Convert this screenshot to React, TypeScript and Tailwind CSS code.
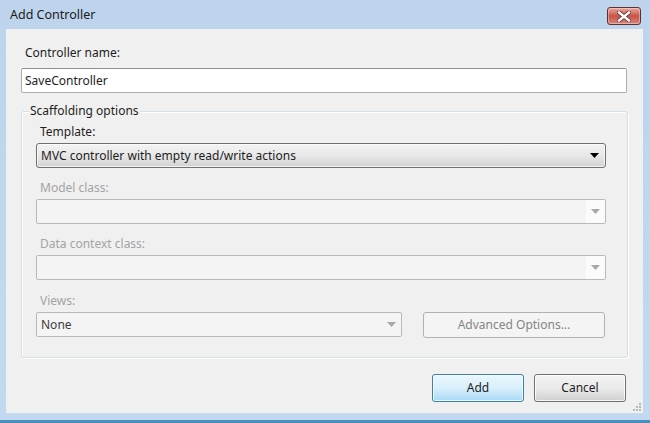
import React from 'react';

const font = { fontFamily: '"Noto Sans", "Open Sans", sans-serif' };

const Arrow = ({ color }: { color: string }) => (
  <svg width="9" height="5" viewBox="0 0 9 5">
    <path d="M0 0 H9 L4.5 5 Z" fill={color} />
  </svg>
);

const DisabledCombo = ({ w = 'w-[570px]', text, editable }: { w?: string; text?: string; editable?: boolean }) => (
  <div className={`${w} h-[25px] flex items-stretch rounded-[2px] border border-[#b7babc] bg-[#f4f4f4] overflow-hidden`}>
    <div className="flex-1 flex items-center pl-[4px] text-[12px] text-[#3c3c3c]">{text}</div>
    <div className={`w-[19px] flex items-center justify-center ${editable ? 'bg-[#fbfbfb]' : ''}`}>
      <Arrow color="#a8a8a8" />
    </div>
  </div>
);

export default function App() {
  return (
    <div
      className="w-[650px] h-[423px] flex flex-col bg-gradient-to-b from-[#bed4ec] to-[#c3d9ef] overflow-hidden"
      style={font}
    >
      {/* Title bar */}
      <div className="h-[29px] flex items-start justify-between pl-[10px] pr-[9px]">
        <div className="pt-[6px] text-[12.5px] text-[#1b1b1b]">Add Controller</div>
        <div className="mt-[7px] w-[34px] h-[18px] rounded-[3px] border border-[#5c3333] bg-gradient-to-b from-[#e9a99c] via-[#c9524a] to-[#d7877a] flex items-center justify-center shadow-[inset_0_0_0_1px_rgba(255,255,255,0.35)]">
          <svg width="14" height="11" viewBox="0 0 14 11">
            <path
              d="M2 1.5 L12 9.5 M12 1.5 L2 9.5"
              stroke="#5a2b2b"
              strokeWidth="4"
              strokeLinecap="square"
            />
            <path
              d="M2 1.5 L12 9.5 M12 1.5 L2 9.5"
              stroke="#ffffff"
              strokeWidth="2.4"
              strokeLinecap="square"
            />
          </svg>
        </div>
      </div>

      {/* Client area */}
      <div className="ml-[6px] w-[637px] h-[384px] bg-[#f0f0f0] flex flex-col relative">
        <div className="pl-[19px] pt-[15px] h-[39px] text-[12px] text-[#1e1e1e]">Controller name:</div>
        <div className="ml-[15px] w-[606px] h-[25px] rounded-[2px] border border-[#abadb3] border-t-[#8e9094] bg-white flex items-center pl-[3px] text-[12px] text-[#1e1e1e]">
          SaveController
        </div>

        {/* Group box */}
        <div className="mt-[11px] ml-[15px] w-[607px] h-[254px] relative">
          <div className="absolute left-0 right-0 top-[7px] bottom-0 rounded-[3px] border border-[#d5dfe5] shadow-[inset_1px_1px_0_#ffffff,1px_1px_0_#ffffff]" />
          <div className="absolute left-[8px] top-[-2px] px-[1px] bg-[#f0f0f0] text-[12px] text-[#1e1e1e]">
            Scaffolding options
          </div>
          <div className="relative pt-[19px] pl-[15px] flex flex-col">
            <div className="pl-[4px] h-[17px] text-[12px] text-[#1e1e1e]">Template:</div>
            <div className="mt-[3px] w-[570px] h-[25px] rounded-[3px] border border-[#707070] bg-gradient-to-b from-[#f3f3f3] via-[#e8e8e8] to-[#d2d2d2] flex items-center justify-between pl-[4px] pr-[6px] shadow-[inset_0_0_0_1px_rgba(255,255,255,0.7)]">
              <span className="text-[12px] text-[#1e1e1e]">MVC controller with empty read/write actions</span>
              <Arrow color="#000000" />
            </div>

            <div className="mt-[11px] pl-[4px] h-[17px] text-[12px] text-[#a3a3a3]">Model class:</div>
            <div className="mt-[3px]">
              <DisabledCombo editable />
            </div>

            <div className="mt-[11px] pl-[4px] h-[17px] text-[12px] text-[#a3a3a3]">Data context class:</div>
            <div className="mt-[3px]">
              <DisabledCombo editable />
            </div>

            <div className="mt-[12px] pl-[4px] h-[17px] text-[12px] text-[#a3a3a3]">Views:</div>
            <div className="mt-[3px] flex items-start gap-[21px]">
              <DisabledCombo w="w-[366px]" text="None" />
              <div className="w-[182px] h-[26px] rounded-[3px] border border-[#adb2b5] bg-[#f4f4f4] flex items-center justify-center text-[12px] text-[#858585]">
                Advanced Options...
              </div>
            </div>
          </div>
        </div>

        {/* Buttons */}
        <div className="mt-[16px] flex justify-end gap-[10px] pr-[17px]">
          <div className="w-[92px] h-[28px] rounded-[3px] border border-[#3c7fb1] bg-gradient-to-b from-[#eaf6fd] via-[#d9f0fc] to-[#a7d9f5] flex items-center justify-center text-[12px] text-[#1e1e1e] shadow-[inset_0_0_0_1px_rgba(255,255,255,0.8)]">
            Add
          </div>
          <div className="w-[92px] h-[28px] rounded-[3px] border border-[#707070] bg-gradient-to-b from-[#f2f2f2] via-[#ebebeb] to-[#cfcfcf] flex items-center justify-center text-[12px] text-[#1e1e1e] shadow-[inset_0_0_0_1px_rgba(255,255,255,0.8)]">
            Cancel
          </div>
        </div>

        {/* Resize grip */}
        <svg className="absolute right-[2px] bottom-[2px]" width="10" height="10" viewBox="0 0 10 10">
          {[
            [8, 2],
            [5, 5],
            [8, 5],
            [2, 8],
            [5, 8],
            [8, 8],
          ].map(([x, y], i) => (
            <rect key={i} x={x} y={y} width="2" height="2" fill="#b8b8b8" />
          ))}
        </svg>
      </div>

      <div className="h-[7px]" />
      <div className="h-[3px] bg-[#4a90bf]" />
    </div>
  );
}
